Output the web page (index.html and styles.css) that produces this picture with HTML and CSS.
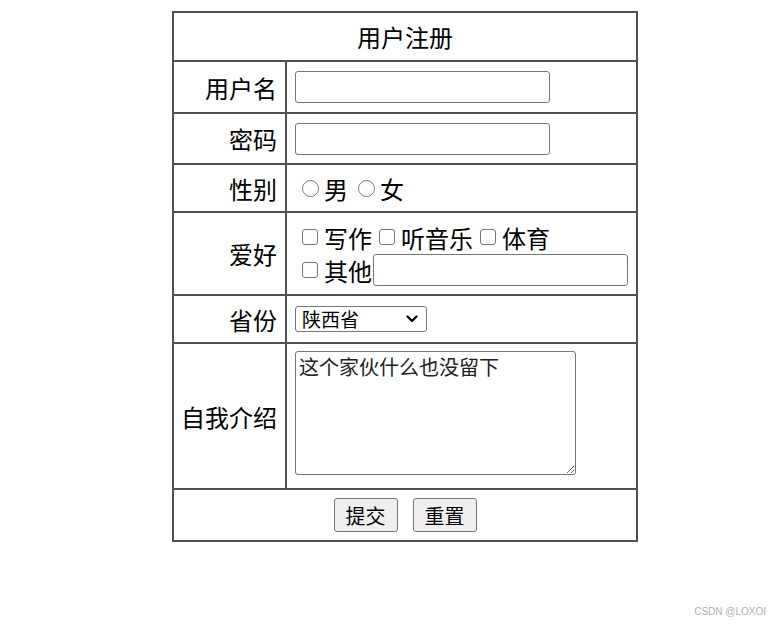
FILE: index.html
```html
<!DOCTYPE html>
<html lang="zh-CN">
<head>
  <meta charset="UTF-8">
  <title>用户注册</title>
  <link rel="stylesheet" href="styles.css">
</head>
<body>

  <form class="reg-form">
    <table class="reg-table">
      <tr class="row-head">
        <td colspan="2" class="title">用户注册</td>
      </tr>
      <tr class="row-user">
        <td class="label">用户名</td>
        <td class="field"><input type="text" class="text-input"></td>
      </tr>
      <tr class="row-pass">
        <td class="label">密码</td>
        <td class="field"><input type="password" class="text-input"></td>
      </tr>
      <tr class="row-sex">
        <td class="label">性别</td>
        <td class="field">
          <div class="choice-line radios">
            <label class="opt"><input type="radio" name="sex" class="radio">男</label>
            <label class="opt"><input type="radio" name="sex" class="radio">女</label>
          </div>
        </td>
      </tr>
      <tr class="row-hobby">
        <td class="label">爱好</td>
        <td class="field">
          <div class="choice-line checks">
            <label class="opt"><input type="checkbox" class="check">写作</label>
            <label class="opt"><input type="checkbox" class="check">听音乐</label>
            <label class="opt"><input type="checkbox" class="check">体育</label>
          </div>
          <div class="choice-line checks">
            <label class="opt"><input type="checkbox" class="check">其他</label>
            <input type="text" class="text-input other-input">
          </div>
        </td>
      </tr>
      <tr class="row-prov">
        <td class="label">省份</td>
        <td class="field">
          <div class="select-wrap">
            <select class="prov-select">
              <option>陕西省</option>
              <option>河南省</option>
              <option>山西省</option>
            </select>
            <svg class="chevron" width="12" height="8" viewBox="0 0 12 8">
              <path d="M1.5 1.5 L6 6 L10.5 1.5" fill="none" stroke="#000" stroke-width="2.2" stroke-linecap="round" stroke-linejoin="round"/>
            </svg>
          </div>
        </td>
      </tr>
      <tr class="row-intro">
        <td class="label">自我介绍</td>
        <td class="field"><textarea class="intro">这个家伙什么也没留下</textarea></td>
      </tr>
      <tr class="row-btns">
        <td colspan="2">
          <div class="buttons">
            <button type="submit" class="btn">提交</button>
            <button type="reset" class="btn">重置</button>
          </div>
        </td>
      </tr>
    </table>
  </form>

  <div class="watermark">CSDN @LOXOI</div>

</body>
</html>
```

FILE: styles.css
```css
body {
  font-family: "Noto Sans CJK SC", "Noto Sans", sans-serif;
  background-color: #fff;
  color: #000;
  margin: 0;
  padding: 0;
}

.reg-form {
  padding: 11px 0 0 172px;
}

.reg-table {
  border-collapse: collapse;
  width: 466px;
  font-size: 24px;
}

.reg-table td {
  border: 2px solid #505050;
  padding: 0;
}

.row-head { height: 49px; }
.row-user { height: 52px; }
.row-pass { height: 51px; }
.row-sex { height: 48px; }
.row-hobby { height: 83px; }
.row-prov { height: 48px; }
.row-intro { height: 146px; }
.row-btns { height: 52px; }

.title {
  text-align: center;
}

.reg-table .label {
  width: 103px;
  text-align: right;
  padding-right: 8px;
}

.reg-table .field {
  padding-left: 8px;
}

.text-input {
  display: block;
  width: 255px;
  height: 32px;
  box-sizing: border-box;
  border: 1px solid #767676;
  border-radius: 3px;
  padding: 0 4px;
  font-size: 18px;
  margin: 0;
}

.choice-line {
  display: flex;
  align-items: center;
  padding-left: 7px;
  height: 33px;
  line-height: 33px;
}

.opt {
  display: inline-flex;
  align-items: center;
}

.radio,
.check {
  appearance: none;
  -webkit-appearance: none;
  box-sizing: border-box;
  margin: 0;
  flex-shrink: 0;
  background-color: #fff;
  border: 1.5px solid #767676;
}

.radio {
  width: 17px;
  height: 17px;
  border-width: 1.3px;
  border-radius: 50%;
}

.check {
  width: 16px;
  height: 16px;
  border-radius: 3px;
}

.radios .opt {
  gap: 5px;
}

.radios .opt + .opt {
  margin-left: 10px;
}

.checks .opt {
  gap: 6px;
}

.checks .opt + .opt {
  margin-left: 7px;
}

.other-input {
  display: inline-block;
  margin-left: 1px;
}

.select-wrap {
  position: relative;
  width: 132px;
}

.prov-select {
  appearance: none;
  -webkit-appearance: none;
  display: block;
  width: 132px;
  height: 26px;
  box-sizing: border-box;
  font-family: inherit;
  font-size: 19px;
  line-height: 24px;
  border: 1px solid #767676;
  border-radius: 3px;
  padding: 0 0 0 6px;
  background-color: #fff;
  color: #000;
}

.chevron {
  position: absolute;
  right: 9px;
  top: 9px;
  pointer-events: none;
}

.intro {
  display: block;
  width: 281px;
  height: 124px;
  box-sizing: border-box;
  border: 1px solid #767676;
  border-radius: 3px;
  margin: 0 0 7px;
  padding: 1px 3px;
  font-family: "Noto Sans CJK SC", serif;
  font-size: 20px;
  line-height: 28px;
  color: #222;
  resize: both;
}

.buttons {
  display: flex;
  justify-content: center;
  gap: 15px;
}

.btn {
  width: 64px;
  height: 34px;
  font-family: inherit;
  font-size: 20px;
  background-color: #efefef;
  border: 1px solid #767676;
  border-radius: 3px;
  padding: 0;
  color: #000;
}

.watermark {
  position: absolute;
  right: 15px;
  bottom: 8px;
  font-family: "Liberation Sans", Arial, sans-serif;
  font-size: 10px;
  color: #b0b0b0;
}
```
